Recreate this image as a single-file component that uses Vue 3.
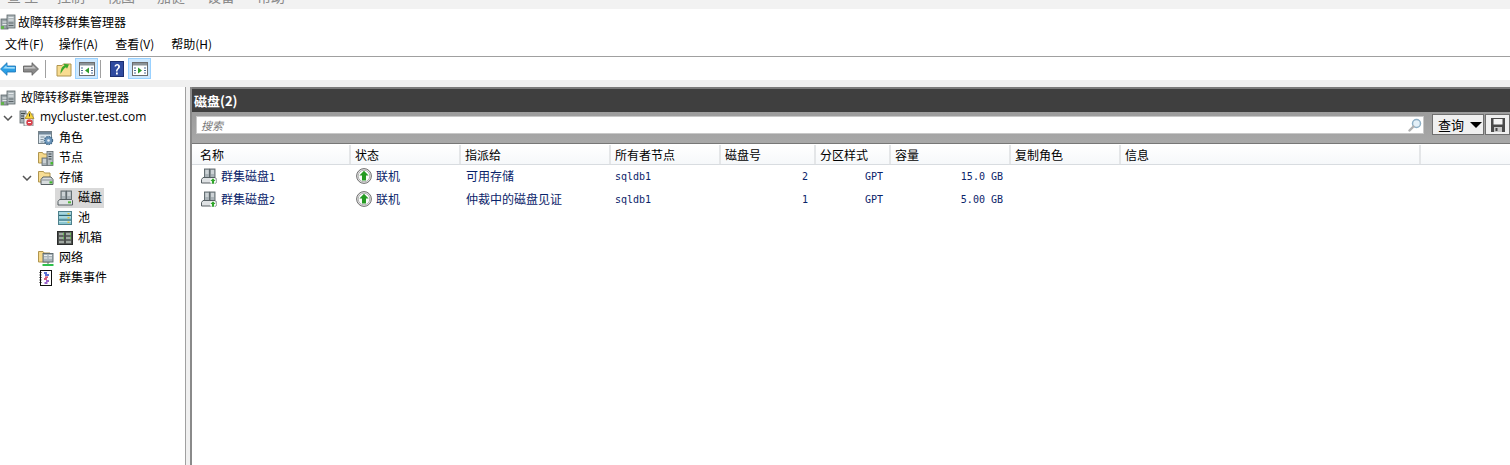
<script setup>
const topMenu = ['查 至', '控制', '视图', '加健', '设备', '帮助']
const menus = ['文件(F)', '操作(A)', '查看(V)', '帮助(H)']

const tree = [
  { label: '故障转移群集管理器', icon: 'i-server', depth: 0 },
  { label: 'mycluster.test.com', icon: 'i-cluster', depth: 1, open: true, latin: true },
  { label: '角色', icon: 'i-role', depth: 2 },
  { label: '节点', icon: 'i-node', depth: 2 },
  { label: '存储', icon: 'i-storage', depth: 2, open: true },
  { label: '磁盘', icon: 'i-disk', depth: 3, selected: true },
  { label: '池', icon: 'i-pool', depth: 3 },
  { label: '机箱', icon: 'i-enclosure', depth: 3 },
  { label: '网络', icon: 'i-network', depth: 2 },
  { label: '群集事件', icon: 'i-events', depth: 2 },
]

const columns = ['名称', '状态', '指派给', '所有者节点', '磁盘号', '分区样式', '容量', '复制角色', '信息', '']

const disks = [
  { name: '群集磁盘', no: '1', state: '联机', assign: '可用存储', owner: 'sqldb1', num: '2', style: 'GPT', size: '15.0 GB' },
  { name: '群集磁盘', no: '2', state: '联机', assign: '仲裁中的磁盘见证', owner: 'sqldb1', num: '1', style: 'GPT', size: '5.00 GB' },
]

// 第一层没有展开箭头的位置
const rowIndent = (depth) => (depth ? (depth - 1) * 19 : 0) + 'px'
</script>

<template>
  <div class="page">
    <svg class="defs" width="0" height="0">
      <defs>
        <symbol id="i-server" viewBox="0 0 16 16">
          <rect x="1" y="5" width="7" height="10" fill="#9aa4a8" stroke="#5d666a" stroke-width=".8" />
          <rect x="7" y="1" width="8" height="13" fill="#aeb7bb" stroke="#5d666a" stroke-width=".8" />
          <path d="M8.500 3.500h5M8.500 6h5M2.500 8h4M2.500 10.500h4" stroke="#e6eaec" />
          <path d="M8.500 9h5M8.500 11.500h5" stroke="#5d666a" />
          <rect x="1" y="12" width="3" height="3" fill="#63b34c" />
        </symbol>
        <symbol id="i-cluster" viewBox="0 0 16 16">
          <rect x="1" y="1" width="6" height="12" fill="#aab3b7" stroke="#5f686c" stroke-width=".8" />
          <rect x="5" y="4" width="9" height="12" fill="#eef1f2" stroke="#6f787c" stroke-width=".8" />
          <path d="M2 3.500h4M2 6h3M2 8.500h3" stroke="#3f484c" />
          <path d="M10.500 1l4.500 7.500h-9z" fill="#f5d43b" stroke="#a8821a" stroke-width=".7" />
          <path d="M10.500 3.500v3" stroke="#333" />
          <circle cx="10.500" cy="12.500" r="3.200" fill="#d9434e" />
          <path d="M9 12.500h3" stroke="#fff" />
        </symbol>
        <symbol id="i-role" viewBox="0 0 16 16">
          <rect x=".5" y="1.500" width="13" height="12" fill="#dbe6ee" stroke="#75828a" />
          <rect x="1" y="2" width="12" height="2.500" fill="#72889a" />
          <path d="M2.500 7h4M2.500 9.500h3M2.500 12h3" stroke="#7f909c" />
          <circle cx="10.500" cy="10.500" r="4" fill="#6d97bd" stroke="#466c8a" stroke-dasharray="1.500 .8" stroke-width="1.400" />
          <circle cx="10.500" cy="10.500" r="1.300" fill="#e9f1f7" />
        </symbol>
        <symbol id="i-node" viewBox="0 0 16 16">
          <path d="M.5 2.500h4l1 1.500h5v9h-10z" fill="#f6d98a" stroke="#b0954e" />
          <rect x="9" y="1.500" width="6" height="14" fill="#b4bdc2" stroke="#5f696e" stroke-width=".8" />
          <path d="M10.500 4h3M10.500 6.500h3M10.500 9h3" stroke="#3d464a" />
          <rect x="12.500" y="12" width="2.500" height="2.500" fill="#46b830" />
          <rect x="4" y="8" width="5" height="7.500" fill="#a7b0b5" stroke="#5f696e" stroke-width=".8" />
          <path d="M5 10h3M5 12h3" stroke="#eef1f2" />
        </symbol>
        <symbol id="i-storage" viewBox="0 0 16 16">
          <path d="M.5 1.500h5l1 1.500h5.500v9h-11.500z" fill="#f7dd94" stroke="#b0954e" />
          <path d="M3 9.500l2-2.500h8l2 2.500v5h-12z" fill="#d8dcde" stroke="#565f63" />
          <path d="M3.500 10h11" stroke="#868f93" />
          <rect x="11.500" y="11.300" width="2.800" height="2.200" fill="#3fb52c" />
        </symbol>
        <symbol id="i-disk" viewBox="0 0 16 16">
          <rect x="4" y="1" width="5" height="8.500" fill="#a9b2b7" stroke="#5a6468" stroke-width=".9" />
          <rect x="9.500" y="1" width="5" height="8.500" fill="#a9b2b7" stroke="#5a6468" stroke-width=".9" />
          <path d="M5 3h3M5 5h3M10.500 3h3M10.500 5h3" stroke="#f0f3f4" />
          <path d="M2.500 9.500h12l1 1v4.500h-14.500v-3.500z" fill="#dfe2e4" stroke="#565f63" />
          <rect x="11" y="11.300" width="3" height="2" fill="#55b940" />
        </symbol>
        <symbol id="i-cdisk" viewBox="0 0 16 16">
          <rect x="3.500" y="1" width="5" height="8.500" fill="#a9b2b7" stroke="#5a6468" stroke-width=".9" />
          <rect x="9" y="1" width="5" height="8.500" fill="#a9b2b7" stroke="#5a6468" stroke-width=".9" />
          <path d="M4.500 3h3M4.500 5h3M10 3h3M10 5h3" stroke="#f0f3f4" />
          <path d="M2 9.500h12l1 1v4.500h-14.500v-3.500z" fill="#dfe2e4" stroke="#565f63" />
          <circle cx="12" cy="13" r="3" fill="#fff" />
          <path d="M12 10.300l2.600 2.700h-1.500v2.800h-2.200v-2.800h-1.500z" fill="#2fa52a" />
        </symbol>
        <symbol id="i-pool" viewBox="0 0 16 16">
          <rect x="1.500" y="1.500" width="13" height="13" fill="#8cc6d0" stroke="#4d808c" />
          <path d="M2 5.500h12M2 10h12" stroke="#2f6572" />
          <path d="M2 3h12M2 7h12M2 11.500h12" stroke="#c3e6ea" />
          <path d="M11.500 3v1.500M11.500 7v1.500M11.500 11.500v1.500" stroke="#e0c040" stroke-width="2" />
        </symbol>
        <symbol id="i-enclosure" viewBox="0 0 16 16">
          <rect x=".5" y="1.500" width="15" height="13" fill="#4b4e4c" stroke="#2b2d2c" />
          <path d="M2 4h5M9 4h5M2 8h5M9 8h5M2 12h5M9 12h5" stroke="#a0a8a2" stroke-width="2.400" />
          <path d="M6 4h1M13 4h1M6 8h1M13 8h1" stroke="#6fbf5b" stroke-width="2.400" />
        </symbol>
        <symbol id="i-network" viewBox="0 0 16 16">
          <path d="M.5 1.500h4.500l1 1.500h6v9h-11.500z" fill="#f6d98a" stroke="#b0954e" />
          <rect x="5" y="3.500" width="10" height="8.500" fill="#a9b4ba" stroke="#5a666c" stroke-width=".9" />
          <path d="M6 5.500h3.300M10.700 5.500h3.300M6 8h3.300M10.700 8h3.300" stroke="#eef1f2" />
          <path d="M10 12v2" stroke="#5a666c" />
          <path d="M4.500 15h11" stroke="#2fc04c" stroke-width="2" />
        </symbol>
        <symbol id="i-events" viewBox="0 0 16 16">
          <rect x="2.500" y=".5" width="11" height="15" fill="#fff" stroke="#111" />
          <path d="M1.500 2.500h2M1.500 5h2M1.500 7.500h2M1.500 10h2M1.500 12.500h2" stroke="#111" />
          <path d="M6 3h3M7 5h4" stroke="#2844c8" stroke-width="1.300" />
          <path d="M7 7.200h3M6 9h3" stroke="#c8284c" stroke-width="1.300" />
          <path d="M8 11h3M6.500 13h3" stroke="#7a30b8" stroke-width="1.300" />
        </symbol>
        <symbol id="i-up" viewBox="0 0 16 16">
          <circle cx="8" cy="8" r="7.400" fill="#e6e6e6" stroke="#6e6e6e" />
          <circle cx="8" cy="8" r="5.800" fill="#fafafa" stroke="#b5b5b5" />
          <path d="M8 2.800l4.600 4.800h-2.600v5h-4v-5h-2.600z" fill="#259a22" />
        </symbol>
        <symbol id="i-back" viewBox="0 0 16 14">
          <path d="M.5 7l6.500-6.300v3.300h8.500v6h-8.500v3.300z" fill="#2a9fe6" stroke="#1a72b4" stroke-width=".8" />
          <path d="M3 6.500l3.500-3.200v1.700h8.300v1.800z" fill="#9fdcfa" />
        </symbol>
        <symbol id="i-forward" viewBox="0 0 16 14">
          <path d="M15.500 7l-6.500-6.300v3.300h-8.500v6h8.500v3.300z" fill="#8a8a8a" stroke="#5c5c5c" stroke-width=".8" />
          <path d="M13 6.500l-3.500-3.200v1.700h-8.300v1.800z" fill="#c2c2c2" />
        </symbol>
        <symbol id="i-folder-up" viewBox="0 0 16 16">
          <path d="M1 4.500h5l1.500-1.500h7.500v12h-14z" fill="#f8dc91" stroke="#b0954e" />
          <path d="M4.500 13c0-5 1.500-7.500 4-8.500l-1-1.800 5.500.7-2 4.400-1-1.500c-1.700.8-3.300 3-5.500 6.700z" fill="#3aa82a" />
        </symbol>
        <symbol id="i-pane-left" viewBox="0 0 16 14">
          <rect x=".5" y=".5" width="15" height="13" fill="#fff" stroke="#6d6d6d" />
          <rect x="1" y="1" width="14" height="2.500" fill="#8b9398" />
          <path d="M2 6h2M2 8.500h2M2 11h2M12 6h2M12 8.500h2M12 11h2" stroke="#4d6e98" />
          <path d="M10 5.500v6l-4-3z" fill="#2f9e2c" />
        </symbol>
        <symbol id="i-pane-right" viewBox="0 0 16 14">
          <rect x=".5" y=".5" width="15" height="13" fill="#fff" stroke="#6d6d6d" />
          <rect x="1" y="1" width="14" height="2.500" fill="#8b9398" />
          <path d="M2 6h2M2 8.500h2M2 11h2M12 6h2M12 8.500h2M12 11h2" stroke="#4d6e98" />
          <path d="M6 5.500v6l4-3z" fill="#2f9e2c" />
        </symbol>
        <symbol id="i-help" viewBox="0 0 14 16">
          <rect x=".5" y=".5" width="13" height="15" fill="#2f4ba0" stroke="#1c2f70" />
          <path d="M4.500 5.500c0-3.500 5.500-3.500 5.500 0 0 2.500-2.500 2.500-2.500 5h-1.500c0-3 2.200-3 2.200-5 0-1.500-2-1.500-2.200 0z" fill="#fff" />
          <rect x="6" y="11.500" width="1.800" height="2" fill="#fff" />
        </symbol>
        <symbol id="i-find" viewBox="0 0 14 14">
          <circle cx="8.500" cy="5.500" r="4" fill="#e4f0f8" stroke="#8fb0c6" stroke-width="1.500" />
          <path d="M5.500 8.500l-4 4" stroke="#b0b0b0" stroke-width="2.400" stroke-linecap="round" />
        </symbol>
        <symbol id="i-save" viewBox="0 0 16 16">
          <path d="M1 1h14v14h-14z" fill="#4a4a4a" />
          <rect x="3.500" y="2" width="9" height="5.500" fill="#f4f4f4" />
          <rect x="4" y="10" width="8" height="5" fill="#c8c8c8" />
          <rect x="5.500" y="11" width="2" height="3" fill="#444" />
        </symbol>
      </defs>
    </svg>

    <div class="top-strip">
      <span v-for="item in topMenu" :key="item" class="top-item">{{ item }}</span>
    </div>

    <div class="title-bar">
      <svg class="ico"><use href="#i-server" /></svg>
      <span>故障转移群集管理器</span>
    </div>

    <div class="menu-bar">
      <span v-for="item in menus" :key="item" class="menu-item">{{ item }}</span>
    </div>

    <div class="toolbar">
      <span class="tool"><svg class="ico"><use href="#i-back" /></svg></span>
      <span class="tool"><svg class="ico"><use href="#i-forward" /></svg></span>
      <i class="tool-sep"></i>
      <span class="tool"><svg class="ico"><use href="#i-folder-up" /></svg></span>
      <span class="tool active"><svg class="ico"><use href="#i-pane-left" /></svg></span>
      <i class="tool-sep"></i>
      <span class="tool"><svg class="ico"><use href="#i-help" /></svg></span>
      <span class="tool active"><svg class="ico"><use href="#i-pane-right" /></svg></span>
    </div>

    <div class="body">
      <!-- 左侧树 -->
      <aside class="tree">
        <div v-for="node in tree" :key="node.label" class="tree-row" :style="{ paddingLeft: rowIndent(node.depth) }">
          <span v-if="node.depth" class="arrow">
            <svg v-if="node.open" width="10" height="6" viewBox="0 0 10 6"><path d="M1 1l4 4 4-4" fill="none" stroke="#555" stroke-width="1.500" /></svg>
          </span>
          <span class="tree-item" :class="{ selected: node.selected }">
            <svg class="ico"><use :href="'#' + node.icon" /></svg>
            <span class="tree-label" :class="{ latin: node.latin }">{{ node.label }}</span>
          </span>
        </div>
      </aside>

      <main class="content">
        <header class="panel-head">磁盘(2)</header>

        <div class="filter">
          <div class="search">
            <span class="hint">搜索</span>
            <svg class="find"><use href="#i-find" /></svg>
          </div>
          <div class="query">
            <span>查询</span>
            <i class="caret"></i>
          </div>
          <div class="save"><svg class="ico"><use href="#i-save" /></svg></div>
        </div>

        <div class="list">
          <div class="row head">
            <div v-for="(col, i) in columns" :key="i" class="head-cell">{{ col }}</div>
          </div>
          <div v-for="disk in disks" :key="disk.no" class="row item">
            <div class="cell name">
              <svg class="ico"><use href="#i-cdisk" /></svg>
              <span>{{ disk.name }}<span class="mono">{{ disk.no }}</span></span>
            </div>
            <div class="cell state">
              <svg class="ico"><use href="#i-up" /></svg>
              <span>{{ disk.state }}</span>
            </div>
            <div class="cell">{{ disk.assign }}</div>
            <div class="cell mono">{{ disk.owner }}</div>
            <div class="cell mono right">{{ disk.num }}</div>
            <div class="cell mono right">{{ disk.style }}</div>
            <div class="cell mono right">{{ disk.size }}</div>
          </div>
        </div>
      </main>
    </div>
  </div>
</template>

<style scoped>
.page {
  display: flex;
  flex-direction: column;
  width: 1510px;
  height: 465px;
  overflow: hidden;
  background: #f0f0f0;
  color: #000;
  font-family: "Noto Sans CJK SC", sans-serif;
  font-size: 12px;
}

.defs {
  position: absolute;
}

.ico {
  display: block;
  flex: none;
  width: 16px;
  height: 16px;
}

.top-strip {
  display: flex;
  flex: none;
  gap: 22px;
  height: 9px;
  padding-left: 7px;
  overflow: hidden;
  background: #f2f2f2;
  color: #8a8a8a;
  font-size: 14px;
  line-height: 0;
}

.top-item {
  width: 28px;
  margin-top: -4px;
  white-space: nowrap;
}

.title-bar {
  display: flex;
  flex: none;
  align-items: center;
  gap: 2px;
  height: 25px;
  background: #fff;
}

.menu-bar {
  display: flex;
  flex: none;
  gap: 17px;
  height: 22px;
  padding-left: 5px;
  line-height: 20px;
  background: #fff;
  border-bottom: 1px solid #a0a0a0;
}

.menu-item {
  white-space: nowrap;
}

.menu-item:first-child {
  margin-right: -2px;
}

.toolbar {
  display: flex;
  flex: none;
  align-items: center;
  height: 23px;
  background: #fff;
}

.tool {
  display: flex;
  align-items: center;
  justify-content: center;
  flex: none;
  width: 16px;
  height: 21px;
}

.tool + .tool {
  margin-left: 7px;
}

.tool.active {
  width: 23px;
  margin-left: 3px;
  box-sizing: border-box;
  background: #cce8ff;
  border: 1px solid #99d1ff;
}

.tool-sep {
  flex: none;
  width: 1px;
  height: 18px;
  margin: 0 10px 0 6px;
  background: #a0a0a0;
}

.active + .tool-sep {
  margin: 0 8px 0 2px;
}

.body {
  display: flex;
  flex: 1;
  min-height: 0;
  padding-top: 7px;
}

.tree {
  flex: none;
  width: 185px;
  padding-top: 1px;
  background: #fff;
  border-right: 1px solid #a0a0a0;
}

.tree-row {
  display: flex;
  align-items: center;
  height: 20px;
}

.arrow {
  display: flex;
  align-items: center;
  flex: none;
  width: 19px;
  padding-left: 3px;
  box-sizing: border-box;
}

.tree-item {
  display: flex;
  align-items: center;
  height: 20px;
  margin-left: -2px;
  padding: 0 2px;
}

.tree-item.selected {
  background: #d9d9d9;
}

.tree-label {
  margin-left: 5px;
  padding-bottom: 2px;
  line-height: 16px;
  white-space: nowrap;
}

.tree-label.latin {
  font-family: "Open Sans", sans-serif;
  font-size: 12px;
}

.content {
  display: flex;
  flex-direction: column;
  flex: 1;
  min-width: 0;
  margin-left: 4px;
  background: #fff;
  border-left: 2px solid #8a8a8a;
}

.panel-head {
  flex: none;
  height: 25px;
  padding-left: 2px;
  background: #3f3f3f;
  border-top: 2px solid #7a7a7a;
  box-sizing: border-box;
  color: #fff;
  font-size: 13px;
  font-weight: 700;
  line-height: 24px;
}

.filter {
  display: flex;
  flex: none;
  align-items: flex-start;
  height: 32px;
  padding: 2px 0 0 4px;
  box-sizing: border-box;
  background: linear-gradient(#9c9c9c, #a8a8a8);
  border-bottom: 1px solid #777;
}

.search {
  display: flex;
  align-items: center;
  justify-content: space-between;
  width: 1228px;
  height: 18px;
  margin-top: 2px;
  padding: 0 1px 0 4px;
  box-sizing: border-box;
  background: #fff;
  border: 1px solid #c8c8c8;
}

.hint {
  color: #777;
  font-size: 11px;
  font-style: italic;
}

.find {
  width: 14px;
  height: 14px;
}

.query {
  display: flex;
  align-items: center;
  gap: 6px;
  width: 52px;
  height: 21px;
  margin-left: 8px;
  padding-left: 5px;
  box-sizing: border-box;
  background: #f0f0f0;
  border: 1px solid #6f6f6f;
  font-size: 13px;
}

.caret {
  width: 0;
  height: 0;
  border-left: 6px solid transparent;
  border-right: 6px solid transparent;
  border-top: 6px solid #000;
}

.save {
  display: flex;
  align-items: center;
  justify-content: center;
  flex: none;
  width: 25px;
  height: 21px;
  margin-left: 1px;
  box-sizing: border-box;
  background: #f0f0f0;
  border: 1px solid #6f6f6f;
}

.list {
  flex: 1;
  padding-top: 1px;
}

.row {
  display: grid;
  grid-template-columns: 155px 110px 150px 110px 95px 75px 120px 110px 300px 1fr;
  padding-left: 3px;
}

.row.head {
  height: 19px;
  background: linear-gradient(#fff, #f6f8fa);
  border-bottom: 1px solid #d8dce0;
}

.head-cell {
  margin-right: -1px;
  padding-left: 5px;
  line-height: 19px;
  border-right: 2px solid #e4e6e8;
}

.head-cell:last-child {
  margin-right: 0;
  border-right: 0;
}

.row.item {
  height: 23px;
  color: #0a246a;
}

.cell {
  display: flex;
  align-items: center;
  padding: 0 0 2px 6px;
  white-space: nowrap;
}

.cell.name,
.cell.state {
  gap: 4px;
}

.mono {
  font-family: "DejaVu Sans Mono", monospace;
  font-size: 10px;
}

.cell.mono {
  padding: 0 0 0 5px;
}

.cell.right {
  justify-content: flex-end;
  padding: 0 7px 0 0;
}
</style>

<style>
html,
body {
  margin: 0;
  background: #fff;
}
</style>
